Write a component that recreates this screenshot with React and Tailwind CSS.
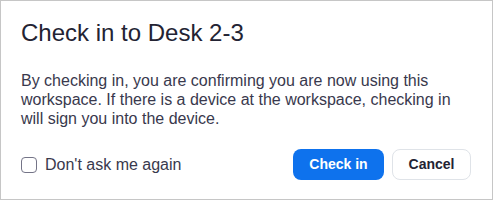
export default function App() {
  return (
    <div
      className="w-[493px] h-[200px] bg-white border border-[#c6c6c6] pl-[20px] pr-[21px] pt-[18px] text-[#232333]"
      style={{ fontFamily: '"Liberation Sans", Arial, sans-serif' }}
    >
      <h1 className="text-[24px] leading-[28px] font-normal">Check in to Desk 2-3</h1>
      <p className="mt-[24px] text-[16px] leading-[19px] text-[#39394d]">
        By checking in, you are confirming you are now using this workspace. If there is a device at the workspace, checking in will sign you into the device.
      </p>
      <div className="mt-[21px] flex items-center justify-between">
        <label className="flex items-center gap-[8px] text-[16px] text-[#39394d]">
          <span className="w-[16px] h-[16px] rounded-[4px] border border-[#747487] bg-white"></span>
          Don't ask me again
        </label>
        <div className="flex gap-[8px]">
          <button className="w-[91px] h-[31px] rounded-[8px] bg-[#0e72ed] text-white text-[14px] font-bold">
            Check in
          </button>
          <button className="w-[79px] h-[31px] rounded-[8px] border border-[#dfe3e8] bg-white text-[#232333] text-[14px] font-bold">
            Cancel
          </button>
        </div>
      </div>
    </div>
  );
}
